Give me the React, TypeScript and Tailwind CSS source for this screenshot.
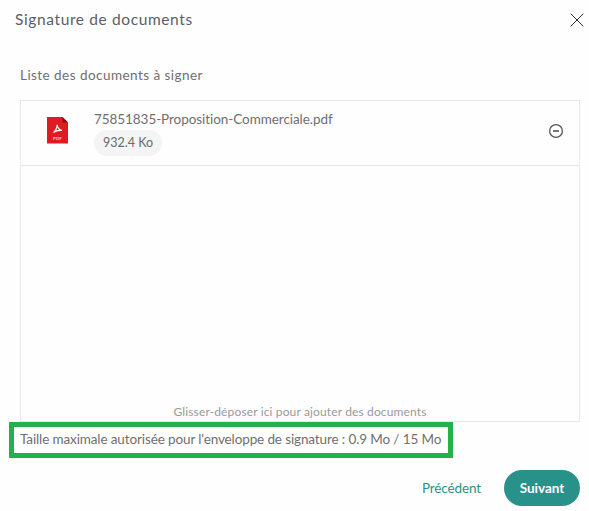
import { X } from "lucide-react";

function PdfIcon() {
    return (
        <svg width="22" height="27" viewBox="0 0 22 27" className="block mb-[6px] shrink-0">
            <path d="M0 0H15.5L21 5.5V26.5H0Z" fill="#e01b22" />
            <path d="M15.5 0L21 5.5H15.5Z" fill="#8e0c12" />
            <path
                d="M6.5 15.5C8 14.5 9.8 11.5 10.2 7.8C10.6 10.8 12.2 13 15 13.4C12.4 13.2 9 13.6 6.5 15.5Z"
                fill="none"
                stroke="#ffffff"
                strokeWidth="1.2"
            />
            <text x="10.5" y="22.5" textAnchor="middle" fontSize="4.5" fontWeight="700" fill="#f6c4c6">
                PDF
            </text>
        </svg>
    );
}

export default function App() {
    return (
        <div className="w-[589px] h-[511px] bg-[#fefefe] overflow-hidden font-['Lato','Noto_Sans',sans-serif] text-[#666666]">
            {/* Titre */}
            <div className="flex items-center justify-between pl-[15px] pr-[5px] h-[40px]">
                <h1 className="text-[15.5px] tracking-[0.62px] text-[#5a5f66]">Signature de documents</h1>
                <button className="w-[14px] h-[14px] flex items-center justify-center text-[#1f2a44]">
                    <X className="w-[24px] h-[24px] shrink-0" strokeWidth={1} />
                </button>
            </div>

            <div className="pl-[20px] pr-[9px]">
                <p className="mt-[25px] text-[13.5px] leading-[20px] tracking-[0.45px] text-[#6f6f6f]">
                    Liste des documents à signer
                </p>

                {/* Liste */}
                <div className="mt-[15px] h-[322px] border border-[#e8e8e8] flex flex-col">
                    <div className="h-[65px] shrink-0 border-b border-[#e8e8e8] flex items-center pl-[26px] pr-[15px]">
                        <PdfIcon />
                        <div className="ml-[25px] flex-1">
                            <div className="text-[13.5px] leading-[18px] tracking-[-0.06px] text-[#6f6f6f]">
                                75851835-Proposition-Commerciale.pdf
                            </div>
                            <span className="mt-[2px] inline-flex items-center h-[26px] px-[9px] rounded-full bg-[#f4f4f4] text-[12.5px] text-[#6a6a6a]">
                                932.4 Ko
                            </span>
                        </div>
                        <svg width="16" height="16" viewBox="0 0 16 16" fill="none" stroke="#555555" strokeWidth="1.3" className="mb-[4px]">
                            <circle cx="8" cy="8" r="6.4" />
                            <path d="M5 8H11" strokeWidth="1.6" />
                        </svg>
                    </div>
                    <div className="flex-1 flex items-end justify-center pb-[1px]">
                        <span className="text-[12px] leading-[16px] tracking-[0.14px] text-[#999999]">
                            Glisser-déposer ici pour ajouter des documents
                        </span>
                    </div>
                </div>
            </div>

            {/* Taille max */}
            <div className="ml-[9px] w-[444px] h-[36px] border-[5px] border-[#22b14c] flex items-center pl-[6px] pb-[1px] bg-white">
                <span className="text-[13.5px] tracking-[-0.12px] whitespace-nowrap text-[#6f6f6f]">
                    Taille maximale autorisée pour l'enveloppe de signature : 0.9 Mo / 15 Mo
                </span>
            </div>

            {/* Actions */}
            <div className="mt-[12px] flex items-center justify-end pr-[9px] gap-[23px]">
                <button className="text-[13.5px] tracking-[-0.13px] text-[#2a9189]">Précédent</button>
                <button className="w-[76px] h-[36px] rounded-full bg-[#28918a] text-white text-[13.5px] font-bold">
                    Suivant
                </button>
            </div>
        </div>
    );
}
